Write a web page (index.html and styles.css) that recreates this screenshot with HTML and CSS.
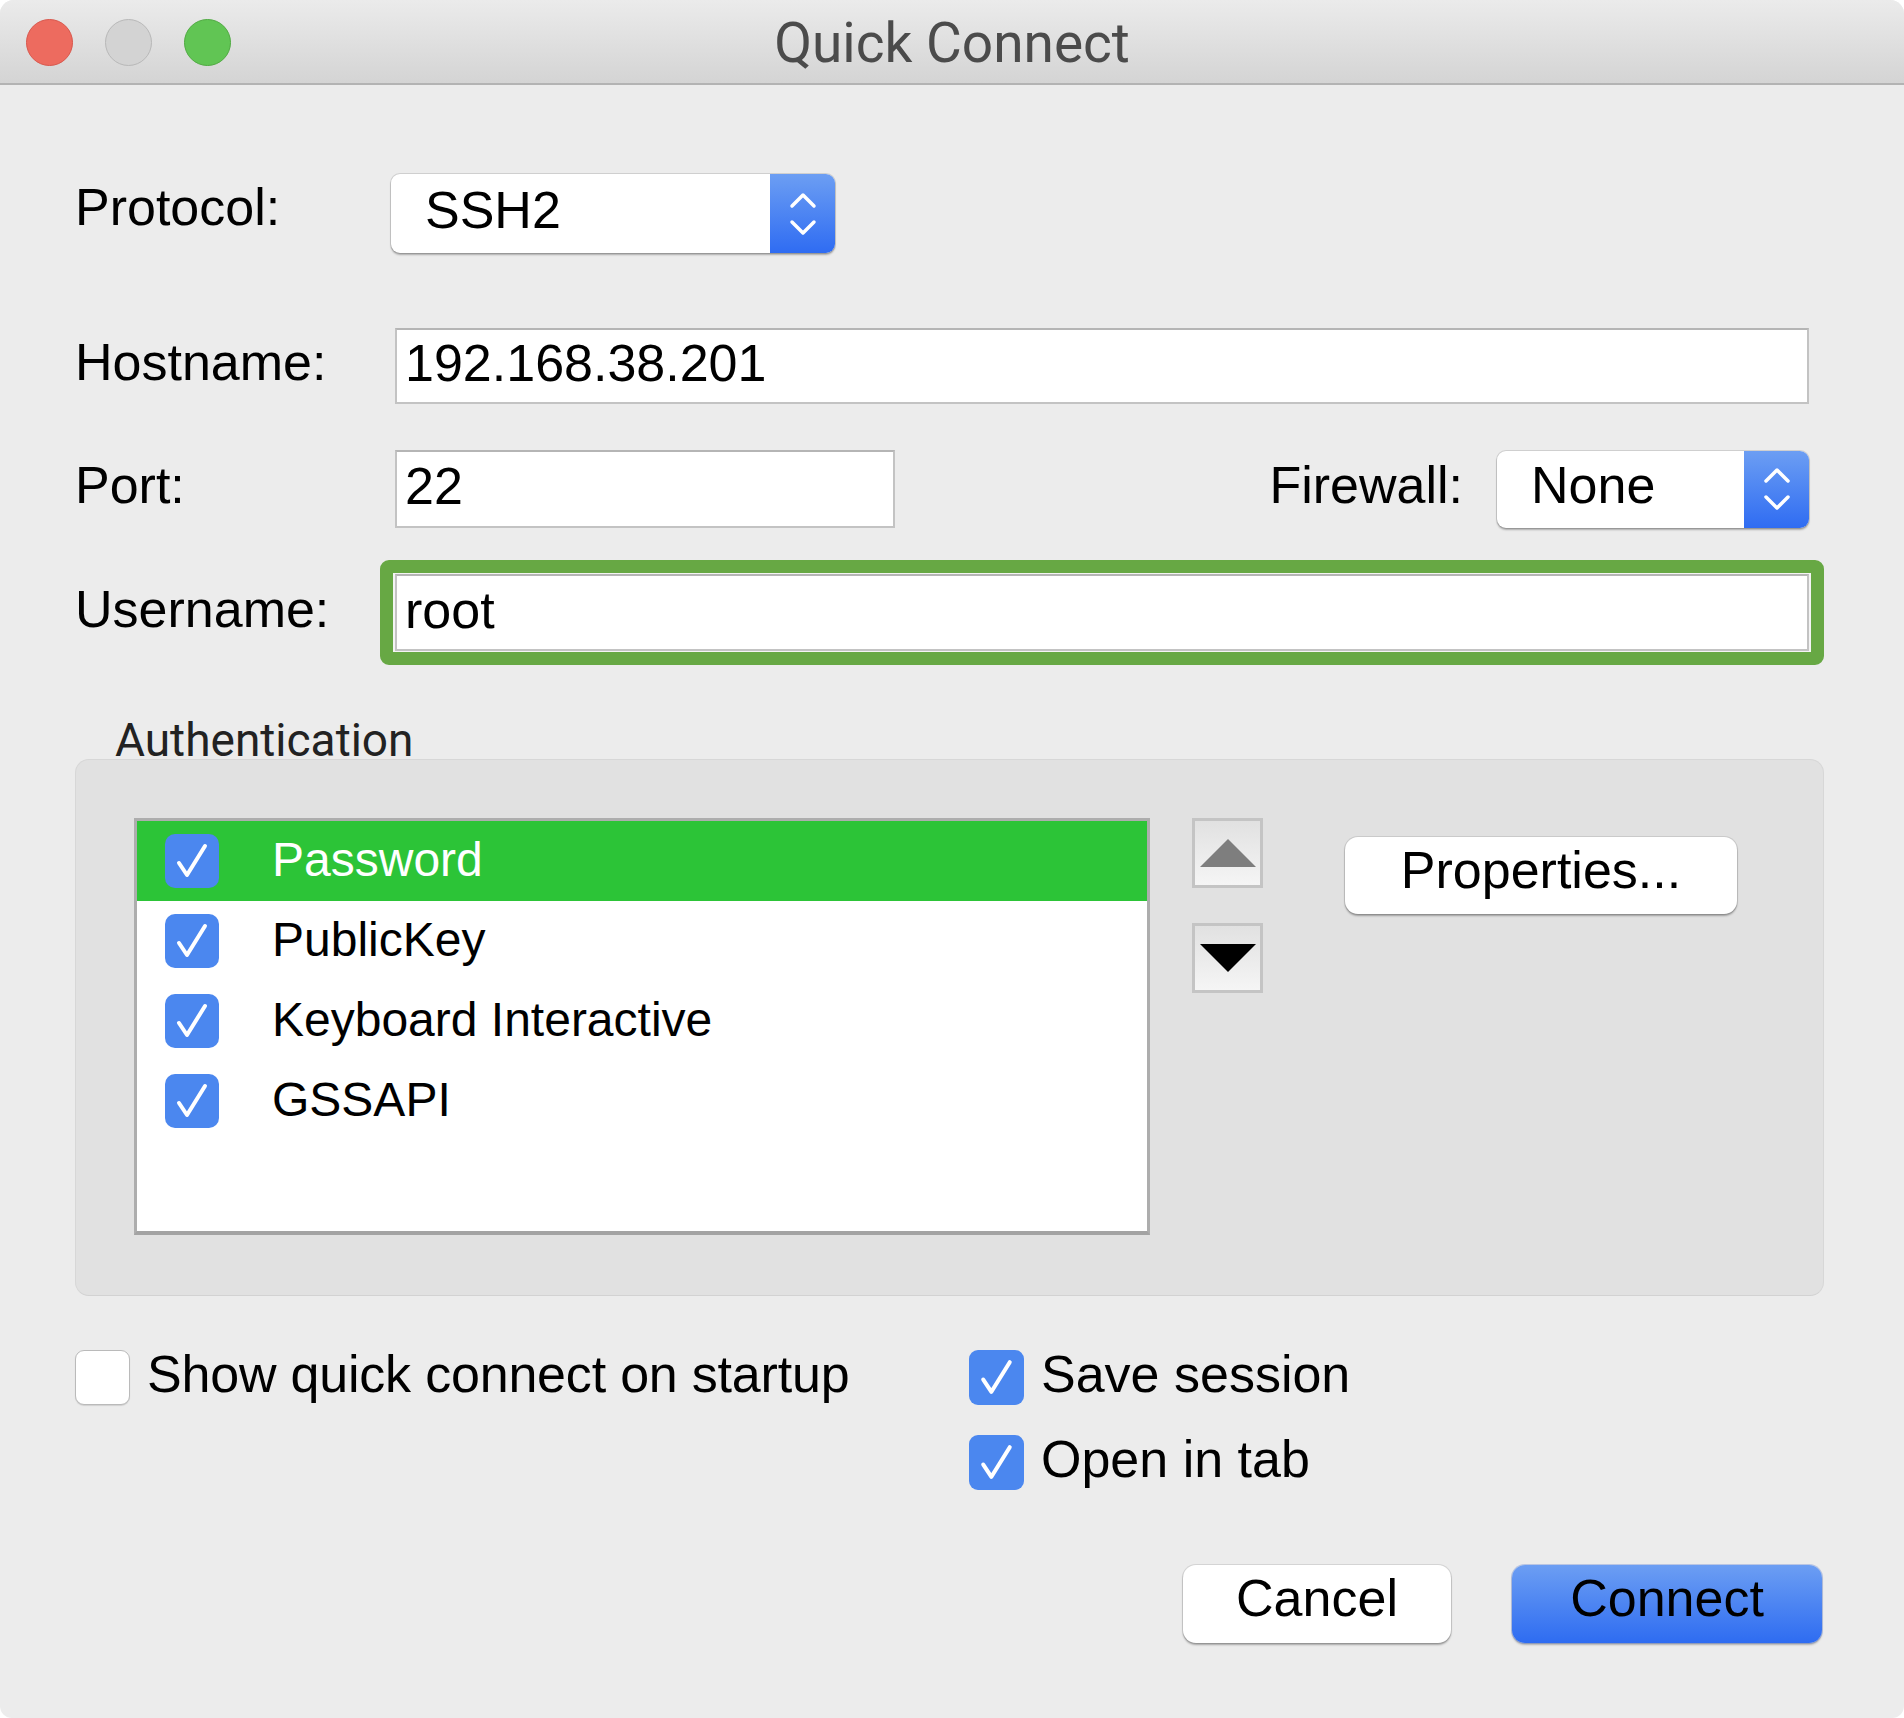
FILE: index.html
```html
<!DOCTYPE html>
<html lang="en">
<head>
<meta charset="utf-8">
<title>Quick Connect</title>
<link rel="stylesheet" href="styles.css">
</head>
<body>
<div class="window">
  <div class="titlebar">
    <div class="lights">
      <span class="light red"></span>
      <span class="light grey"></span>
      <span class="light green"></span>
    </div>
    <div class="title">Quick Connect</div>
    <div></div>
  </div>

  <div class="content">
    <div class="row row-protocol">
      <div class="label">Protocol:</div>
      <div class="select select-protocol">
        <span class="select-value">SSH2</span>
        <span class="select-arrows">
          <svg width="30" height="46" viewBox="0 0 30 46"><polyline points="4,15 15,4 26,15" fill="none" stroke="#fff" stroke-width="3.5" stroke-linecap="round" stroke-linejoin="round"/><polyline points="4,31 15,42 26,31" fill="none" stroke="#fff" stroke-width="3.5" stroke-linecap="round" stroke-linejoin="round"/></svg>
        </span>
      </div>
    </div>

    <div class="row row-host">
      <div class="label">Hostname:</div>
      <div class="field field-wide">192.168.38.201</div>
    </div>

    <div class="row row-port">
      <div class="label">Port:</div>
      <div class="field field-port">22</div>
      <div class="firewall">
        <div class="fw-label">Firewall:</div>
        <div class="select select-fw">
          <span class="select-value">None</span>
          <span class="select-arrows">
            <svg width="30" height="46" viewBox="0 0 30 46"><polyline points="4,15 15,4 26,15" fill="none" stroke="#fff" stroke-width="3.5" stroke-linecap="round" stroke-linejoin="round"/><polyline points="4,31 15,42 26,31" fill="none" stroke="#fff" stroke-width="3.5" stroke-linecap="round" stroke-linejoin="round"/></svg>
          </span>
        </div>
      </div>
    </div>

    <div class="row row-user">
      <div class="label">Username:</div>
      <div class="highlight">
        <div class="field field-user">root</div>
      </div>
    </div>

    <div class="auth">
      <div class="auth-title">Authentication</div>
      <div class="auth-box">
        <div class="list">
          <div class="list-row selected">
            <span class="check"><svg width="54" height="54" viewBox="0 0 54 54"><path d="M14 29 L22 41 L40 12" fill="none" stroke="#fff" stroke-width="4" stroke-linecap="round" stroke-linejoin="round"/></svg></span>
            <span>Password</span>
          </div>
          <div class="list-row">
            <span class="check"><svg width="54" height="54" viewBox="0 0 54 54"><path d="M14 29 L22 41 L40 12" fill="none" stroke="#fff" stroke-width="4" stroke-linecap="round" stroke-linejoin="round"/></svg></span>
            <span>PublicKey</span>
          </div>
          <div class="list-row">
            <span class="check"><svg width="54" height="54" viewBox="0 0 54 54"><path d="M14 29 L22 41 L40 12" fill="none" stroke="#fff" stroke-width="4" stroke-linecap="round" stroke-linejoin="round"/></svg></span>
            <span>Keyboard Interactive</span>
          </div>
          <div class="list-row">
            <span class="check"><svg width="54" height="54" viewBox="0 0 54 54"><path d="M14 29 L22 41 L40 12" fill="none" stroke="#fff" stroke-width="4" stroke-linecap="round" stroke-linejoin="round"/></svg></span>
            <span>GSSAPI</span>
          </div>
        </div>
        <div class="movers">
          <div class="mover"><svg width="56" height="28" viewBox="0 0 56 28"><polygon points="0,28 28,0 56,28" fill="#7e7e7e"/></svg></div>
          <div class="mover"><svg width="56" height="28" viewBox="0 0 56 28"><polygon points="0,0 56,0 28,28" fill="#000"/></svg></div>
        </div>
        <div class="btn btn-props">Properties...</div>
      </div>
    </div>

    <div class="options">
      <div class="opt-left">
        <div class="opt"><span class="check empty"></span><span>Show quick connect on startup</span></div>
      </div>
      <div class="opt-right">
        <div class="opt"><span class="check"><svg width="55" height="55" viewBox="0 0 54 54"><path d="M14 29 L22 41 L40 12" fill="none" stroke="#fff" stroke-width="4" stroke-linecap="round" stroke-linejoin="round"/></svg></span><span>Save session</span></div>
        <div class="opt"><span class="check"><svg width="55" height="55" viewBox="0 0 54 54"><path d="M14 29 L22 41 L40 12" fill="none" stroke="#fff" stroke-width="4" stroke-linecap="round" stroke-linejoin="round"/></svg></span><span>Open in tab</span></div>
      </div>
    </div>

    <div class="actions">
      <div class="btn btn-cancel">Cancel</div>
      <div class="btn btn-connect">Connect</div>
    </div>
  </div>
</div>
</body>
</html>
```

FILE: styles.css
```css
html, body {
  margin: 0;
  padding: 0;
  background: #ffffff;
}

body {
  font-family: "Liberation Sans", Arial, Helvetica, sans-serif;
  color: #000;
}

.window {
  width: 1904px;
  height: 1718px;
  background: #ececec;
  border-radius: 14px 14px 12px 12px;
  overflow: hidden;
}

/* ---------- title bar ---------- */
.titlebar {
  height: 83px;
  border-bottom: 2px solid #b3b3b3;
  background: linear-gradient(#ebebeb, #d4d4d4);
  display: grid;
  grid-template-columns: 1fr auto 1fr;
  align-items: center;
}

.lights {
  display: flex;
  gap: 32px;
  padding-left: 26px;
}

.light {
  width: 47px;
  height: 47px;
  border-radius: 50%;
  box-sizing: border-box;
}

.light.red {
  background: #ed6b5f;
  border: 1.5px solid #d9564b;
}

.light.grey {
  background: #d3d3d3;
  border: 1.5px solid #b8b8b8;
}

.light.green {
  background: #61c554;
  border: 1.5px solid #4faa41;
}

.title {
  font-family: Roboto, "Liberation Sans", sans-serif;
  font-size: 55px;
  line-height: 83px;
  padding-top: 2px;
  color: #4b4b4b;
}

/* ---------- form rows ---------- */
.content {
  padding: 0 80px 0 75px;
}

.row {
  display: flex;
  align-items: center;
  margin-right: 15px;
}

.label {
  width: 320px;
  flex: none;
  font-size: 52px;
  padding-bottom: 8px;
}

.row-protocol .label {
  padding-bottom: 14px;
}

.row-protocol {
  margin-top: 89px;
  height: 79px;
}

.row-host {
  margin-top: 75px;
  height: 76px;
}

.row-port {
  margin-top: 46px;
  height: 78px;
}

.row-user {
  margin-top: 46px;
  height: 77px;
}

.select {
  display: flex;
  height: 79px;
  background: #fff;
  border-radius: 9px;
  box-shadow: 0 0 0 1px rgba(0, 0, 0, 0.12), 0 2px 2px rgba(0, 0, 0, 0.28);
  overflow: hidden;
}

.select-protocol {
  width: 444px;
  margin-left: -4px;
}

.select-fw {
  width: 312px;
  height: 77px;
}

.select-value {
  flex: 1;
  padding-left: 34px;
  padding-bottom: 8px;
  font-size: 52px;
  display: flex;
  align-items: center;
}

.select-arrows {
  width: 65px;
  flex: none;
  background: linear-gradient(#6c9ef3, #2f6cf2);
  display: flex;
  align-items: center;
  justify-content: center;
}

.field {
  box-sizing: border-box;
  height: 100%;
  background: #fff;
  border: 2px solid #c3c3c3;
  border-top-color: #b5b5b5;
  padding-left: 8px;
  padding-bottom: 6px;
  font-size: 52px;
  display: flex;
  align-items: center;
}

.field-wide {
  flex: 1;
}

.field-port {
  width: 500px;
  flex: none;
}

.firewall {
  margin-left: auto;
  display: flex;
  align-items: center;
  gap: 34px;
}

.fw-label {
  font-size: 52px;
  padding-bottom: 8px;
}

.highlight {
  flex: 1;
  height: 77px;
  margin: -14px -15px;
  padding: 1px 2px;
  border: 13px solid #67a844;
  border-radius: 9px;
  background: #f4f4f4;
}

.field-user {
  height: 77px;
}

/* ---------- authentication group ---------- */
.auth {
  margin-top: 70px;
}

.auth-title {
  font-family: Roboto, "Liberation Sans", sans-serif;
  font-size: 46px;
  line-height: 38px;
  height: 38px;
  padding-left: 40px;
  color: #222;
}

.auth-box {
  height: 537px;
  box-sizing: border-box;
  background: #e1e1e1;
  border: 1px solid #d7d7d7;
  border-bottom-color: #d2d2d2;
  border-radius: 14px;
  padding: 58px 0 0 58px;
  display: flex;
  align-items: flex-start;
}

.list {
  width: 1016px;
  height: 417px;
  box-sizing: border-box;
  flex: none;
  background: #fff;
  border: 3px solid #adadad;
  border-bottom-width: 4px;
  border-bottom-color: #a3a3a3;
}

.list-row {
  height: 80px;
  display: flex;
  align-items: center;
  padding-left: 28px;
  font-size: 48px;
}

.list-row span:last-child {
  padding-bottom: 4px;
}

.list-row.selected {
  background: #2cc437;
  color: #fff;
}

.check {
  width: 54px;
  height: 54px;
  flex: none;
  box-sizing: border-box;
  border-radius: 10px;
  background: #4b87ef;
  display: flex;
  align-items: center;
  justify-content: center;
}

.list-row .check {
  margin-right: 53px;
}

.movers {
  margin-left: 42px;
  display: flex;
  flex-direction: column;
  gap: 35px;
}

.mover {
  width: 71px;
  height: 70px;
  box-sizing: border-box;
  border: 3px solid #c4c4c4;
  background: linear-gradient(#e1e1e1, #f5f5f5);
  display: flex;
  align-items: center;
  justify-content: center;
}

.btn {
  box-sizing: border-box;
  display: flex;
  align-items: center;
  justify-content: center;
  font-size: 52px;
  background: #fff;
  border-radius: 13px;
  box-shadow: 0 0 0 1px rgba(0, 0, 0, 0.1), 0 2px 2px rgba(0, 0, 0, 0.3);
  padding-bottom: 12px;
}

.btn-props {
  margin-left: 82px;
  margin-top: 19px;
  width: 392px;
  height: 77px;
}

/* ---------- options ---------- */
.options {
  margin-top: 54px;
  display: flex;
}

.opt-left {
  width: 894px;
  flex: none;
}

.opt-right {
  display: flex;
  flex-direction: column;
  gap: 30px;
}

.opt {
  display: flex;
  align-items: center;
  height: 55px;
  font-size: 52px;
}

.opt span:last-child {
  padding-bottom: 8px;
}

.opt-left .opt span:last-child {
  letter-spacing: -0.2px;
}

.opt .check {
  width: 55px;
  height: 55px;
  margin-right: 17px;
  border-radius: 9px;
}

.check.empty {
  background: #fff;
  border: 1.5px solid #bababa;
  box-shadow: 0 1px 1px rgba(0, 0, 0, 0.12);
}

/* ---------- action buttons ---------- */
.actions {
  margin-top: 75px;
  display: flex;
  justify-content: flex-end;
  gap: 61px;
  padding-right: 2px;
}

.btn-cancel {
  width: 268px;
  height: 78px;
}

.btn-connect {
  width: 310px;
  height: 78px;
  background: linear-gradient(#6c9ef3, #2e6cf1);
  box-shadow: 0 0 0 1px rgba(30, 80, 200, 0.25), 0 2px 2px rgba(0, 0, 0, 0.25);
}
```
